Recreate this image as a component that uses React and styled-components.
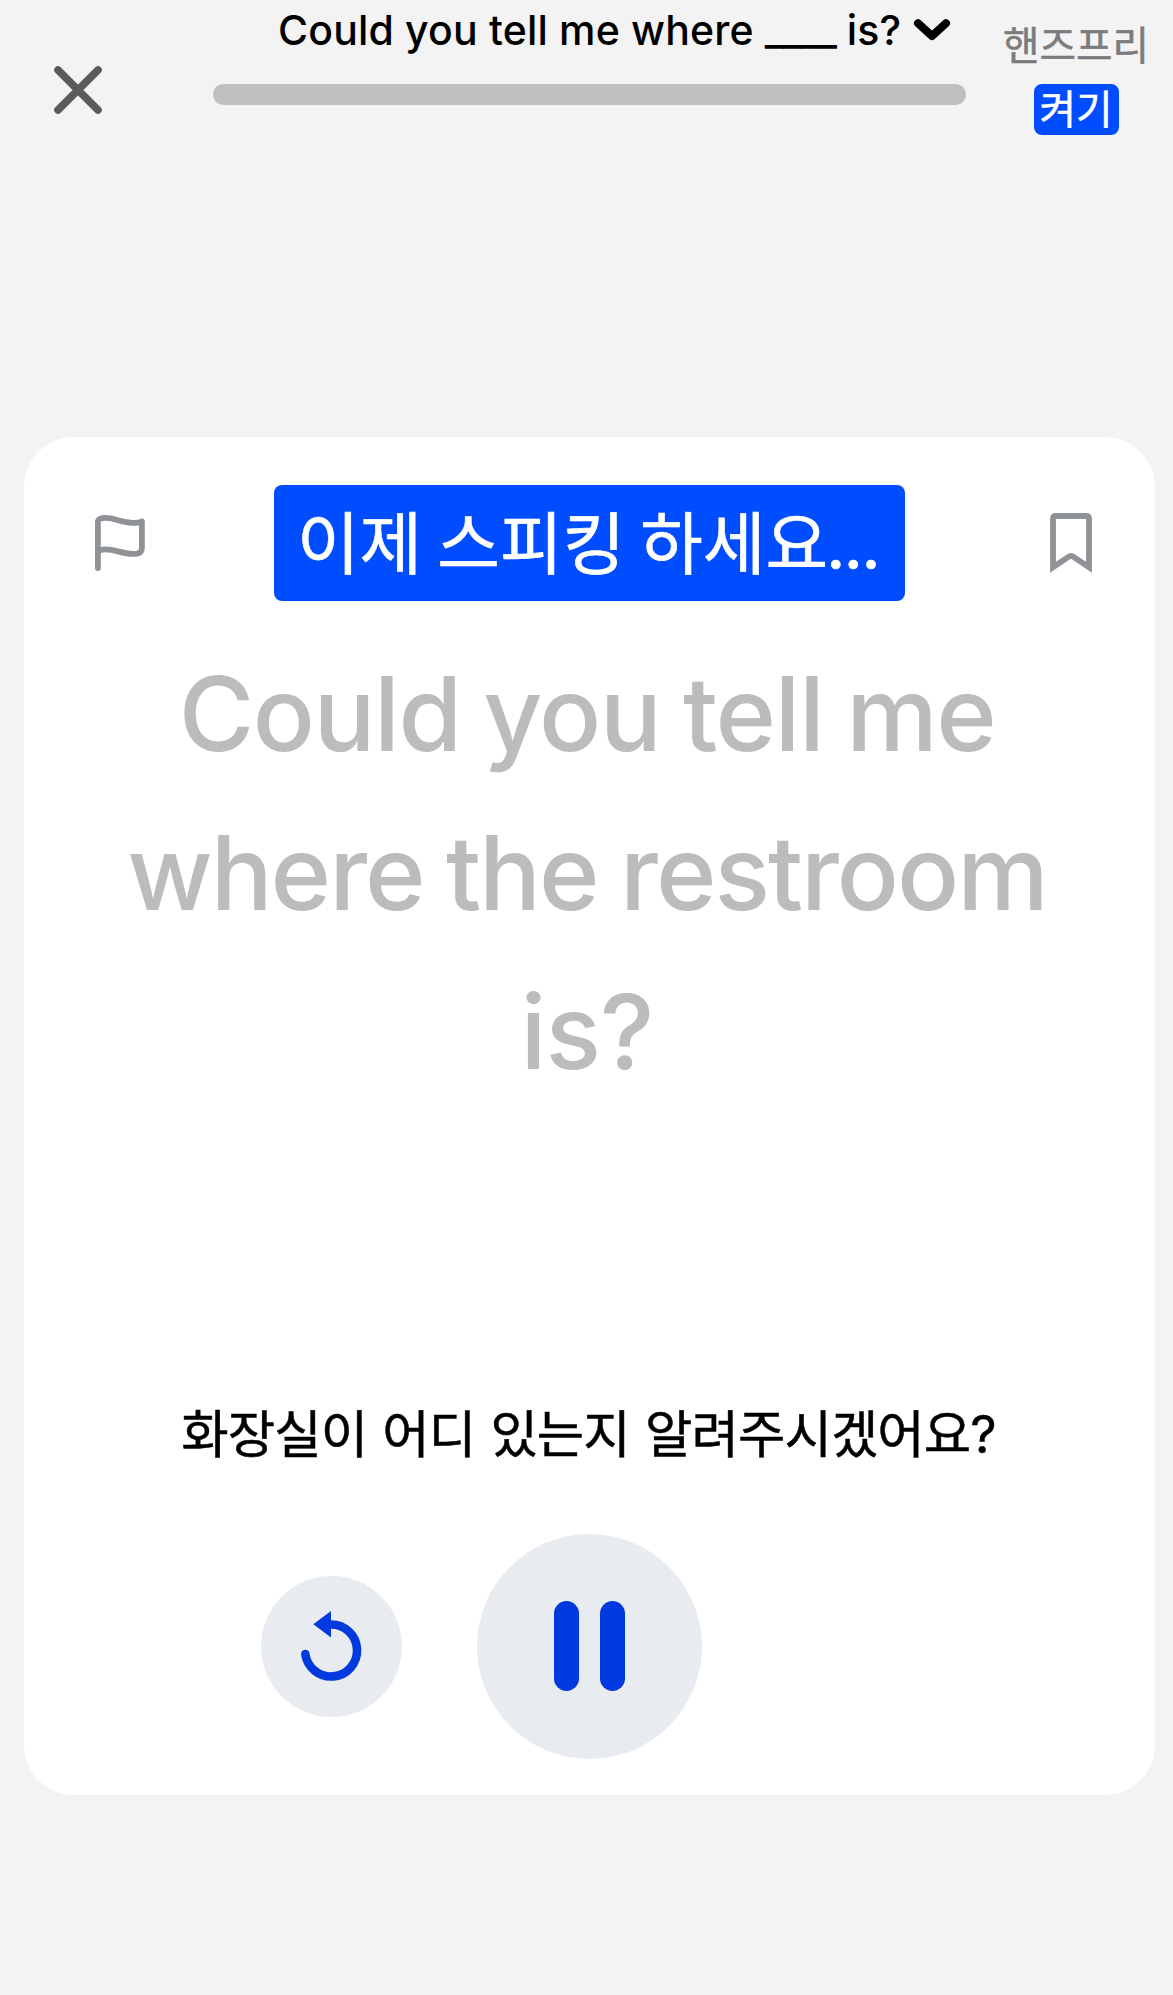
import React from "react";
import styled, { createGlobalStyle } from "styled-components";

const latin = `Inter, "Noto Sans CJK KR", sans-serif`;
const korean = `"Noto Sans CJK KR", sans-serif`;
const brand = "#004dff";
const action = "#003adf";

const GlobalStyle = createGlobalStyle`
  *, *::before, *::after { box-sizing: border-box; }
  body { margin: 0; background: #f3f3f3; }
  button { border: 0; padding: 0; margin: 0; background: none; font: inherit; color: inherit; }
  svg { display: block; overflow: visible; fill: none; }
`;

const Screen = styled.main`
  display: flex;
  flex-direction: column;
  width: 1173px;
  height: 1995px;
  background: #f3f3f3;
  font-family: ${latin};
  overflow: hidden;
`;

const Header = styled.header`
  display: grid;
  grid-template-columns: 159px 753px 194px;
  height: 437px;
  padding-left: 54px;
`;

const CloseButton = styled.button`
  align-self: start;
  justify-self: start;
  margin-top: 66px;
`;

const Lesson = styled.div`
  display: flex;
  flex-direction: column;
  gap: 24px;
`;

const TitleButton = styled.button`
  display: flex;
  align-items: center;
  height: 60px;
  padding-left: 65px;
  color: #000;
  font-size: 41px;
  font-weight: 500;
  line-height: 60px;
  letter-spacing: 0.17px;
  white-space: pre;
`;

const Blank = styled.span`
  letter-spacing: -1.3px;
`;

const TitleChevron = styled.svg`
  margin-left: 13px;
`;

const ProgressTrack = styled.div`
  height: 21px;
  border-radius: 11px;
  background: #bfbfc1;
`;

const HandsFree = styled.div`
  display: flex;
  flex-direction: column;
  align-items: center;
  width: 166px;
  margin-left: 27px;
  padding-top: 18px;
  font-family: ${korean};
  font-size: 39.7px;
  -webkit-text-stroke: 0.5px currentColor;
`;

const HandsFreeLabel = styled.span`
  height: 50px;
  color: #7b7b7d;
  line-height: 50px;
`;

const HandsFreeToggle = styled.button`
  width: 85px;
  height: 51px;
  margin-top: 16px;
  padding-bottom: 6px;
  border-radius: 8px;
  background: ${brand};
  color: #fff;
  line-height: 45px;
`;

const Card = styled.section`
  display: flex;
  flex-direction: column;
  height: 1358px;
  margin: 0 18px 0 24px;
  padding-top: 48px;
  border-radius: 50px;
  background: #fff;
`;

const CardTop = styled.div`
  display: grid;
  grid-template-columns: 250px 631px 250px;
  height: 116px;
`;

const IconButton = styled.button`
  align-self: start;
  justify-self: ${(p) => p.$side};
  margin: ${(p) => p.$inset};
  color: #8f9297;
`;

const Prompt = styled.div`
  padding: 1px 0 8px 23px;
  border-radius: 8px;
  background: ${brand};
  color: #fff;
  font-family: ${korean};
  font-size: 68px;
  line-height: 107px;
  white-space: nowrap;
  -webkit-text-stroke: 0.7px currentColor;
`;

const Dots = styled.span`
  margin-left: -2px;
  font-family: ${latin};
  line-height: 0;
  letter-spacing: -2px;
`;

const Phrase = styled.h1`
  display: flex;
  flex-direction: column;
  align-items: center;
  margin: 33px 5px 0 0;
  color: #bcbcbc;
  font-size: 103px;
  font-weight: 500;
  line-height: 159px;
  white-space: nowrap;
`;

const PhraseLine = styled.span`
  letter-spacing: ${(p) => p.$tracking}px;
  word-spacing: ${(p) => p.$gap}px;
`;

const Translation = styled.p`
  margin: 280px 2px 0 0;
  color: #000;
  font-family: ${korean};
  font-size: 51.5px;
  line-height: 80px;
  letter-spacing: -0.9px;
  word-spacing: 4.5px;
  text-align: center;
  white-space: nowrap;
  -webkit-text-stroke: 0.5px currentColor;
`;

const QuestionMark = styled.span`
  font-family: ${latin};
  line-height: 0;
`;

const Controls = styled.div`
  display: grid;
  grid-template-columns: 141px 225px 141px;
  justify-content: center;
  align-items: center;
  column-gap: 75px;
  margin-top: 63px;
`;

const RoundButton = styled.button`
  display: flex;
  align-items: center;
  justify-content: center;
  gap: 21.5px;
  width: ${(p) => p.$size}px;
  height: ${(p) => p.$size}px;
  border-radius: 50%;
  background: #e8ebf0;
  color: ${action};
`;

const PauseBar = styled.span`
  width: 25px;
  height: 90px;
  margin-bottom: 1px;
  border-radius: 12.5px;
  background: currentColor;
`;

const CloseIcon = () => (
  <svg width="48" height="48" viewBox="0 0 48 48" stroke="#5a5a5c" strokeWidth="7.6" strokeLinecap="round">
    <path d="M4 4L44 44M44 4L4 44" />
  </svg>
);

const ChevronIcon = () => (
  <TitleChevron width="36" height="21" viewBox="0 0 36 21" stroke="#000" strokeWidth="8" strokeLinecap="round" strokeLinejoin="round">
    <path d="M4 3.2L18 16L32 3.2" />
  </TitleChevron>
);

const FlagIcon = () => (
  <svg width="50" height="56" viewBox="0 0 50 56" stroke="currentColor" strokeWidth="5.8" strokeLinecap="round" strokeLinejoin="round">
    <path d="M2.9 53V7.5Q2.9 4 7 3.2C19 1 28 10 42 7.6Q45.5 7.2 46.9 6.4V33Q46.9 38 41.5 38.8C27 40.5 17 31.5 5.5 35Q2.9 36 2.9 38" />
  </svg>
);

const BookmarkIcon = () => (
  <svg width="42" height="60" viewBox="0 0 42 60" stroke="currentColor" strokeWidth="5.8">
    <path d="M3 54.2V6Q3 3 6 3H36Q39 3 39 6V54.2L23.2 43.6Q21 42.2 18.8 43.6Z" />
  </svg>
);

const ReplayIcon = () => (
  <svg width="141" height="141" viewBox="0 0 141 141">
    <path d="M44.3 78A26 26 0 1 0 70 48.5" stroke="currentColor" strokeWidth="8.6" strokeLinecap="round" />
    <path d="M52.3 48.3L70 35V61.4Z" fill="currentColor" />
  </svg>
);

export default function App() {
  return (
    <>
      <GlobalStyle />
      <Screen>
        <Header>
          <CloseButton aria-label="닫기"><CloseIcon /></CloseButton>
          <Lesson>
            <TitleButton>
              <span>Could you tell me where </span>
              <Blank>____</Blank>
              <span> is?</span>
              <ChevronIcon />
            </TitleButton>
            <ProgressTrack />
          </Lesson>
          <HandsFree>
            <HandsFreeLabel>핸즈프리</HandsFreeLabel>
            <HandsFreeToggle>켜기</HandsFreeToggle>
          </HandsFree>
        </Header>
        <Card>
          <CardTop>
            <IconButton $side="start" $inset="30px 0 0 71px" aria-label="신고"><FlagIcon /></IconButton>
            <Prompt>이제 스피킹 하세요<Dots>...</Dots></Prompt>
            <IconButton $side="end" $inset="28px 63px 0 0" aria-label="저장"><BookmarkIcon /></IconButton>
          </CardTop>
          <Phrase>
            <PhraseLine $tracking={-1.5} $gap={-3.2}>Could you tell me</PhraseLine>
            <PhraseLine $tracking={-2} $gap={-3}>where the restroom</PhraseLine>
            <PhraseLine $tracking={-0.9} $gap={0}>is?</PhraseLine>
          </Phrase>
          <Translation>화장실이 어디 있는지 알려주시겠어요<QuestionMark>?</QuestionMark></Translation>
          <Controls>
            <RoundButton $size={141} aria-label="다시"><ReplayIcon /></RoundButton>
            <RoundButton $size={225} aria-label="일시정지"><PauseBar /><PauseBar /></RoundButton>
          </Controls>
        </Card>
      </Screen>
    </>
  );
}
